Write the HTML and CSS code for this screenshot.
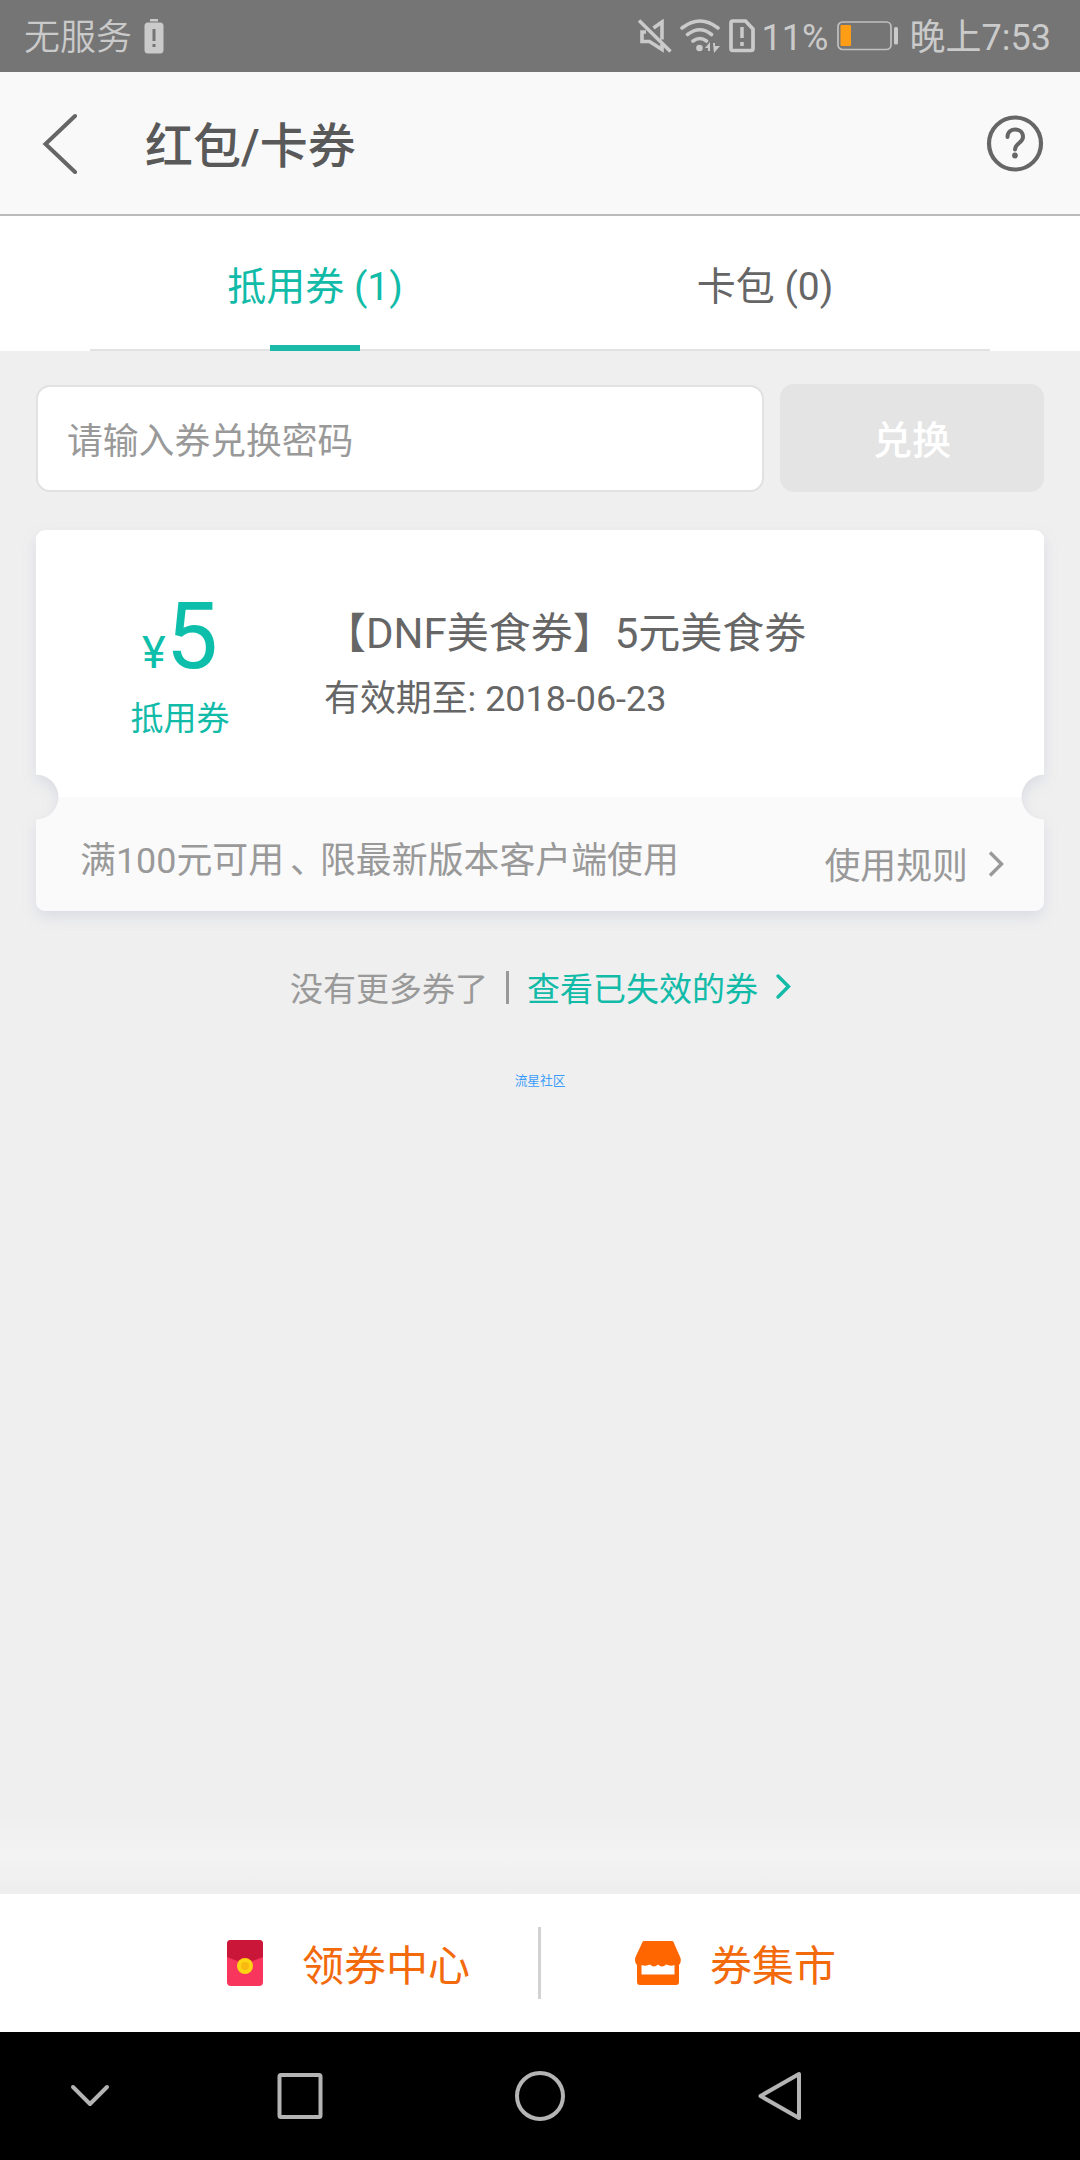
FILE: index.html
```html
<!DOCTYPE html>
<html lang="zh-CN">
<head>
<meta charset="utf-8">
<title>红包/卡券</title>
<link rel="stylesheet" href="styles.css">
</head>
<body>
<div class="screen">
  <div class="status">
    <div class="status-left">
      <span class="carrier">无服务</span>
      <svg class="sim-battery" width="20" height="36" viewBox="0 0 20 36"><path fill="#cacaca" d="M6 1h8v2.500H6z"/><rect x="0.500" y="4.500" width="19" height="31" rx="3.500" fill="#cacaca"/><path d="M10 11v12M10 26v3" stroke="#757575" stroke-width="3"/></svg>
    </div>
    <div class="status-right">
      <svg class="mute" width="34" height="34" viewBox="0 0 34 34" fill="none" stroke="#cacaca" stroke-width="3.600"><path d="M1 1.500l31.500 31M15.500 9l8.500-6v17.500M8 13H4v9.500h7.500L24 30.500V25"/></svg>
      <svg class="wifi" width="40" height="34" viewBox="0 0 40 34"><g fill="none" stroke="#cacaca" stroke-width="3.600" stroke-linecap="round"><path d="M2 9Q20-5 38 9M7.500 15.500Q20 6 31.500 15.500M13 22Q20 17 26.500 22"/></g><circle cx="19.500" cy="29" r="3.300" fill="#cacaca"/><path fill="#cacaca" d="M25 29l5-6v9h-2v-3zM33 24h2v3h5l-6 7z"/></svg>
      <svg class="sim" width="26" height="34" viewBox="0 0 26 34"><path d="M3.500 2h13L24 10v19.500q0 2-2 2H4q-2 0-2-2V4q0-2 1.500-2z" fill="none" stroke="#cacaca" stroke-width="3.700"/><path d="M13 8v11M13 23v4" stroke="#cacaca" stroke-width="3.500"/></svg>
      <span class="percent">11%</span>
      <svg class="battery" width="62" height="30" viewBox="0 0 62 30"><rect x="1" y="1" width="53" height="27.500" rx="4.500" fill="none" stroke="#c0c0c0" stroke-width="1.700"/><rect x="3.500" y="4" width="10.500" height="21" rx="1" fill="#ff9d15"/><rect x="57" y="6" width="4" height="17.500" rx="1.500" fill="#cacaca"/></svg>
      <span class="clock">晚上7:53</span>
    </div>
  </div>

  <header class="header">
    <svg width="36" height="62" viewBox="0 0 36 62"><path d="M33 4L3.500 32 33 60" fill="none" stroke="#666" stroke-width="4" stroke-linecap="round"/></svg>
    <h1>红包/卡券</h1>
    <svg width="58" height="58" viewBox="0 0 58 58" fill="none" stroke="#666"><circle cx="29" cy="29.500" r="26" stroke-width="4.200"/><path d="M21.500 23c0-10 15.500-10 15.500 0 0 6-8 6-8 12.500" stroke-width="4" stroke-linecap="round"/><circle cx="29" cy="41.500" r="2.900" fill="#666" stroke="none"/></svg>
  </header>

  <nav class="tabs">
    <div class="tab active">抵用券 (1)</div>
    <div class="tab">卡包 (0)</div>
  </nav>

  <main class="content">
    <div class="redeem">
      <input class="code" type="text" placeholder="请输入券兑换密码">
      <button class="redeem-btn">兑换</button>
    </div>

    <section class="coupon">
      <svg class="coupon-bg" width="1080" height="430" viewBox="0 0 1080 430">
        <defs>
          <filter id="shade" x="-5%" y="-10%" width="110%" height="125%"><feDropShadow dx="0" dy="6" stdDeviation="7" flood-color="#9298bd" flood-opacity=".22"/></filter>
          <clipPath id="ticket"><path d="M45 20H1035a9 9 0 0 1 9 9V264.500a22.500 22.500 0 0 0 0 45V392a9 9 0 0 1-9 9H45a9 9 0 0 1-9-9V309.500a22.500 22.500 0 0 0 0-45V29a9 9 0 0 1 9-9z"/></clipPath>
        </defs>
        <g filter="url(#shade)"><g clip-path="url(#ticket)"><rect width="1080" height="287" fill="#fff"/><rect y="287" width="1080" height="143" fill="#fafafa"/></g></g>
      </svg>
      <div class="coupon-main">
        <div class="value">
          <div class="amount"><span class="yen">¥</span>5</div>
          <div class="kind">抵用券</div>
        </div>
        <div class="info">
          <div class="name">【DNF美食券】5元美食劵</div>
          <div class="date">有效期至: 2018-06-23</div>
        </div>
      </div>
      <div class="coupon-foot">
        <span class="terms">满100元可用<span class="comma">、</span>限最新版本客户端使用</span>
        <span class="rules">使用规则<svg width="16" height="28" viewBox="0 0 16 28"><path d="M2 2.500L13.500 14 2 25.500" fill="none" stroke="#999" stroke-width="3.400"/></svg></span>
      </div>
    </section>

    <div class="more">
      <span>没有更多券了</span><i class="bar"></i><a class="expired">查看已失效的券<svg width="16" height="28" viewBox="0 0 16 28"><path d="M3 3L13.500 13.500 3 24" fill="none" stroke="#11bba8" stroke-width="3.400" stroke-linecap="round"/></svg></a>
    </div>
    <div class="community">流星社区</div>
  </main>

  <footer class="actions">
    <a class="action center">
      <svg width="36" height="46" viewBox="0 0 36 46"><rect width="36" height="46" rx="4" fill="#f8355c"/><path d="M4 0h28q4 0 4 4v13L18 24 0 17V4q0-4 4-4z" fill="#ca1739"/><circle cx="18" cy="26" r="8" fill="#ffd414"/><circle cx="18" cy="26" r="4" fill="#f9b911"/></svg>
      <span>领券中心</span>
    </a>
    <a class="action market">
      <svg width="46" height="44" viewBox="0 0 46 44"><path fill="#f60" d="M9 0h28q1 0 1.500 1L45.500 17q1 5-1.500 7v17q0 3-3 3H5q-3 0-3-3V24Q-1 21 .5 16L7.500 1Q8 0 9 0zM6.500 24v9.500h33V24q-4 1.500-8.500-.5-4 4-8 0-4 4-8 0-4 2-8.500 .5z"/></svg>
      <span>券集市</span>
    </a>
  </footer>

  <div class="sysnav">
    <svg width="1080" height="128" viewBox="0 0 1080 128" fill="none" stroke="#b4b4b4" stroke-width="4" stroke-linejoin="round" stroke-linecap="round"><path d="M73 55l17 17 17-17"/><rect x="279.500" y="43" width="41" height="42" rx="1.500"/><circle cx="540" cy="64" r="23"/><path d="M799 42v44L760.500 64z"/></svg>
  </div>
</div>
</body>
</html>
```
FILE: styles.css
```css
* { box-sizing: border-box; }
body {
  margin: 0;
  font-family: Roboto, "Noto Sans CJK SC", sans-serif;
  color: #666;
}
svg { display: block; flex: none; }
.screen {
  width: 1080px;
  height: 2160px;
  display: flex;
  flex-direction: column;
  background: #efefef;
  overflow: hidden;
  white-space: nowrap;
}
.status {
  height: 72px;
  flex: none;
  display: flex;
  justify-content: space-between;
  padding: 0 29px 0 24px;
  background: #757575;
  color: #cacaca;
  font-size: 36px;
  line-height: 72px;
}
.status-left, .status-right { display: flex; align-items: center; }
.carrier, .percent, .clock { padding-top: 4px; }
.carrier { font-weight: 350; }
.sim-battery { margin-left: 12px; }
.wifi { margin-left: 8px; }
.sim { margin-left: 9px; }
.percent { margin-left: 7px; width: 66px; }
.battery { margin-left: 9px; }
.clock { margin-left: 11px; }

.header {
  height: 144px;
  flex: none;
  display: flex;
  align-items: center;
  padding: 0 36px 0 42px;
  background: #f9f9f9;
  border-bottom: 2px solid #bbb;
}
.header h1 {
  flex: 1;
  margin: 0 0 0 67px;
  padding-top: 7px;
  font-size: 48px;
  font-weight: 500;
  line-height: 60px;
  color: #595959;
}

.tabs {
  height: 135px;
  flex: none;
  display: flex;
  padding: 0 90px;
  background: linear-gradient(#e2e2e2, #e2e2e2) 90px 133px / 900px 2px no-repeat #fff;
}
.tab {
  flex: 1;
  height: 135px;
  display: flex;
  flex-direction: column;
  align-items: center;
  font-size: 39px;
  line-height: 142px;
}
.active {
  color: #11bba8;
  background: linear-gradient(#1bb9a8, #1bb9a8) 180px 129px / 90px 6px no-repeat;
}

.content { flex: 1; }
.redeem { display: flex; gap: 16px; padding: 33px 36px 0; height: 160px; }
.code {
  width: 728px;
  height: 107px;
  margin-top: 1px;
  padding: 6px 29px 0;
  border: 2px solid #e1e1e1;
  border-radius: 14px;
  background: #fff;
  font: 35.8px Roboto, "Noto Sans CJK SC", sans-serif;
}
.code::placeholder { color: #999; }
.redeem-btn {
  width: 264px;
  height: 108px;
  padding: 0 0 2px;
  border: 0;
  border-radius: 14px;
  background: #e4e4e4;
  color: #fff;
  font: 500 39px Roboto, "Noto Sans CJK SC", sans-serif;
}

.coupon { position: relative; height: 400px; padding: 19px 36px 0; }
.coupon-bg { position: absolute; left: 0; top: -1px; }
.coupon-main { position: relative; display: flex; height: 267px; }
.value { width: 288px; padding-top: 52px; text-align: center; color: #11bba8; }
.amount { height: 108px; font-size: 93px; line-height: 110px; color: #0dbfab; }
.yen { font-size: 45px; }
.kind { font-size: 33px; line-height: 58px; }
.info { padding-top: 74px; }
.name { font-size: 42px; line-height: 60px; }
.date { font-size: 35.900px; line-height: 70px; }
.coupon-foot {
  position: relative;
  display: flex;
  justify-content: space-between;
  padding: 0 40px 0 44px;
  font-size: 35.900px;
  line-height: 128px;
  color: #999;
}
.comma { padding-left: 6px; letter-spacing: -6px; }
.rules { display: flex; align-items: center; gap: 20px; padding-top: 6px; height: 134px; }
.rules svg { margin-bottom: 6px; }

.more {
  display: flex;
  justify-content: center;
  align-items: center;
  height: 60px;
  margin-top: 46px;
  padding-left: 1px;
  font-size: 33px;
  color: #999;
}
.bar { width: 3px; height: 33px; margin: 0 18px 0 18px; background: #999; }
.expired { display: flex; align-items: center; gap: 17px; color: #11bba8; }
.community {
  margin-top: 54px;
  text-align: center;
  font-size: 12.700px;
  line-height: 20px;
  color: #3b9dfb;
}

.actions {
  position: relative;
  height: 138px;
  flex: none;
  display: flex;
  background: linear-gradient(#d2d2d2, #d2d2d2) 538px 33px / 3px 72px no-repeat #fff;
  color: #f26a0c;
  font-size: 42px;
}
.actions::before {
  content: "";
  position: absolute;
  left: 0;
  right: 0;
  bottom: 138px;
  height: 78px;
  background: linear-gradient(#efefef, #f3f3f3 50%, #eee);
}
.action { display: flex; align-items: center; width: 540px; }
.action span { padding-bottom: 2px; }
.center { padding-left: 227px; gap: 39px; }
.market { padding-left: 95px; gap: 29px; }
.sysnav { height: 128px; flex: none; background: #000; }
```
